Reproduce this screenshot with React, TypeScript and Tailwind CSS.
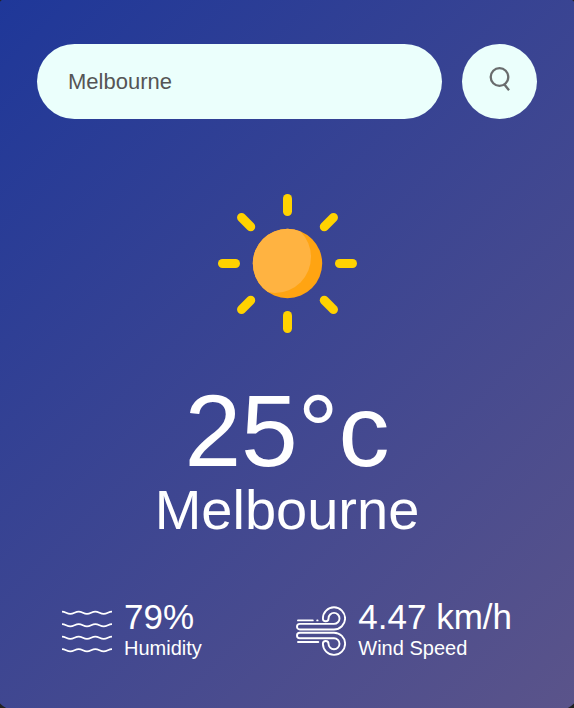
import { useState } from "react";

const rays = [0, 45, 90, 135, 180, 225, 270, 315];

function SearchIcon() {
  return (
    <svg className="h-6 w-[22px]" viewBox="0 0 22 24" fill="none" stroke="#696c6d" strokeWidth="2.3" aria-hidden="true">
      <circle cx="10.5" cy="10" r="8.8" />
      <path d="M15 17 L20 23.2" />
    </svg>
  );
}

function SunIcon() {
  return (
    <svg className="h-[140px] w-[140px]" viewBox="-1 0 140 140" role="img" aria-label="Clear sky">
      <defs>
        <clipPath id="sun-disc">
          <circle cx="69.5" cy="69.5" r="34.7" />
        </clipPath>
      </defs>
      {rays.map((angle) => (
        <rect key={angle} x="65" y="0" width="9" height="22" rx="4.5" fill="#ffd200" transform={`rotate(${angle} 69.5 69.5)`} />
      ))}
      <circle cx="69.5" cy="69.5" r="34.7" fill="#ffa412" />
      <circle cx="57" cy="63" r="36" fill="#ffb341" clipPath="url(#sun-disc)" />
    </svg>
  );
}

function HumidityIcon() {
  return (
    <svg className="mb-1 h-[50px] w-[50px] shrink-0" viewBox="0 0 50 50" fill="none" stroke="#fff" strokeWidth="1.8" aria-hidden="true">
      {[6.7, 19.2, 31.7, 44.2].map((y) => (
        <path key={y} d={`M0 ${y - 1} C3.5 ${y - 1} 4.8 ${y + 1.2} 8.3 ${y + 1.2} S13.2 ${y - 1} 16.7 ${y - 1} S21.5 ${y + 1.2} 25 ${y + 1.2} S29.8 ${y - 1} 33.3 ${y - 1} S38.2 ${y + 1.2} 41.7 ${y + 1.2} S46.5 ${y - 1} 50 ${y - 1}`} />
      ))}
    </svg>
  );
}

function WindIcon() {
  return (
    <svg className="mb-1 h-[50px] w-[50px] shrink-0" viewBox="0 0 50 50" fill="none" stroke="#fff" strokeWidth="1.9" strokeLinecap="round" aria-hidden="true">
      <path d="M3.8 17.9 H38 A5.5 5.5 0 1 0 32.5 12.4 A2.8 2.8 0 0 1 26.9 12.4 A11.1 11.1 0 1 1 38 23.5 H3.8 A2.8 2.8 0 0 1 3.8 17.9 Z" />
      <path d="M3.8 32.3 H38 A5.5 5.5 0 1 1 32.5 37.8 A2.8 2.8 0 0 0 26.9 37.8 A11.1 11.1 0 1 0 38 26.7 H3.8 A2.8 2.8 0 0 0 3.8 32.3 Z" />
      <path d="M2 14.4 H16.8 M21.2 14.4 H21.6 M2 36 H22.3" />
    </svg>
  );
}

export default function App() {
  const [city, setCity] = useState("Melbourne");

  return (
    <div className="min-h-screen overflow-hidden bg-[#222222] font-['Liberation_Sans',Arial,sans-serif]">
      <main className="-mx-[7px] -mt-[6px] -mb-[3px] rounded-[25px] bg-[linear-gradient(135deg,#1e3799,#5b548a)] px-11 pt-[50px] pb-[51px] text-center text-white">
        <form className="flex items-center gap-5" onSubmit={(e) => e.preventDefault()}>
          <input
            type="text"
            aria-label="City name"
            spellCheck={false}
            value={city}
            onChange={(e) => setCity(e.target.value)}
            className="h-[75px] min-w-0 flex-1 rounded-full bg-[#ebfffc] px-[31px] text-[22px] text-[#555555] outline-none"
          />
          <button
            type="submit"
            aria-label="Search"
            className="flex h-[75px] w-[75px] shrink-0 items-center justify-center rounded-full bg-[#ebfffc] pb-1.5"
          >
            <SearchIcon />
          </button>
        </form>

        <section className="mt-[75px] flex flex-col items-center">
          <SunIcon />
          <h1 className="mt-[46px] text-[102px] leading-[102px]">25°c</h1>
          <h2 className="text-[56px] leading-[56px]">Melbourne</h2>
        </section>

        <section className="mt-[59px] flex items-center justify-between px-[25px] text-left">
          <div className="flex items-end gap-3">
            <HumidityIcon />
            <div>
              <p className="text-[35px] leading-10">79%</p>
              <p className="text-[20px] leading-[23px]">Humidity</p>
            </div>
          </div>
          <div className="flex items-end gap-3">
            <WindIcon />
            <div>
              <p className="text-[35px] leading-10">4.47 km/h</p>
              <p className="text-[20px] leading-[23px]">Wind Speed</p>
            </div>
          </div>
        </section>
      </main>
    </div>
  );
}
